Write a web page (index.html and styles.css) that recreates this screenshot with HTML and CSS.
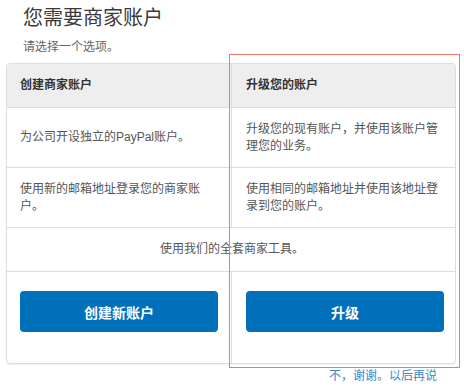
FILE: index.html
```html
<!DOCTYPE html>
<html lang="zh-CN">
<head>
<meta charset="utf-8">
<link rel="stylesheet" href="styles.css">
</head>
<body>
<div class="page">
  <h1 class="title">您需要商家账户</h1>
  <p class="subtitle">请选择一个选项。</p>
  <div class="card">
    <div class="cell head">创建商家账户</div>
    <div class="cell head right">升级您的账户</div>
    <div class="cell row">为公司开设独立的PayPal账户。</div>
    <div class="cell row right">升级您的现有账户，并使用该账户管理您的业务。</div>
    <div class="cell row">使用新的邮箱地址登录您的商家账户。</div>
    <div class="cell row right">使用相同的邮箱地址并使用该地址登录到您的账户。</div>
    <div class="cell full">使用我们的全套商家工具。</div>
    <div class="cell actions"><button class="btn">创建新账户</button></div>
    <div class="cell actions right"><button class="btn">升级</button></div>
  </div>
  <div class="footer"><a class="later" href="#">不，谢谢。以后再说</a></div>
</div>
<div class="highlight"></div>
</body>
</html>
```
FILE: styles.css
```css
html, body {
  margin: 0;
  padding: 0;
  background: #ffffff;
}
body {
  font-family: "Liberation Sans", "Noto Sans CJK SC", sans-serif;
  color: #555555;
  width: 464px;
  height: 389px;
  position: relative;
  overflow: hidden;
}
.page {
  padding: 6px 0 0 6px;
  width: 450px;
}
.title {
  margin: 0 0 0 17px;
  font-size: 20px;
  line-height: 24px;
  font-weight: normal;
  color: #3a3a3a;
}
.subtitle {
  margin: 9px 0 0 17px;
  font-size: 12px;
  line-height: 16px;
  color: #666666;
}
.card {
  margin-top: 8px;
  border: 1px solid #dddddd;
  border-radius: 4px;
  box-shadow: 0 1px 1px rgba(0, 0, 0, 0.06);
  display: grid;
  grid-template-columns: 1fr 1fr;
  overflow: hidden;
}
.cell {
  display: flex;
  align-items: center;
  padding: 0 11px 0 13px;
  font-size: 12px;
  line-height: 17px;
  border-bottom: 1px solid #dddddd;
}
.cell.right {
  border-left: 1px solid #dddddd;
  padding-left: 14px;
}
.head {
  min-height: 43px;
  background: #eeeeee;
  color: #333333;
  font-weight: bold;
}
.row {
  min-height: 59px;
  box-sizing: border-box;
  padding-top: 8px;
  padding-bottom: 8px;
  height: 60px;
}
.full {
  grid-column: 1 / 3;
  justify-content: center;
  min-height: 43px;
}
.actions {
  border-bottom: none;
  padding-top: 19px;
  padding-bottom: 31px;
  padding-right: 13px;
}
.actions.right {
  padding-right: 11px;
}
.btn {
  width: 100%;
  height: 41px;
  border: none;
  border-radius: 4px;
  background: #0070ba;
  color: #ffffff;
  font-family: "Liberation Sans", "Noto Sans CJK SC", sans-serif;
  font-size: 14px;
  font-weight: bold;
  cursor: pointer;
}
.footer {
  display: flex;
  justify-content: flex-end;
  padding: 4px 19px 0 0;
}
.later {
  font-size: 12px;
  line-height: 16px;
  color: #3a87c8;
  text-decoration: none;
}
.highlight {
  position: absolute;
  left: 229px;
  top: 54px;
  width: 229px;
  height: 312px;
  border: 1px solid #f07a66;
  pointer-events: none;
}
```
